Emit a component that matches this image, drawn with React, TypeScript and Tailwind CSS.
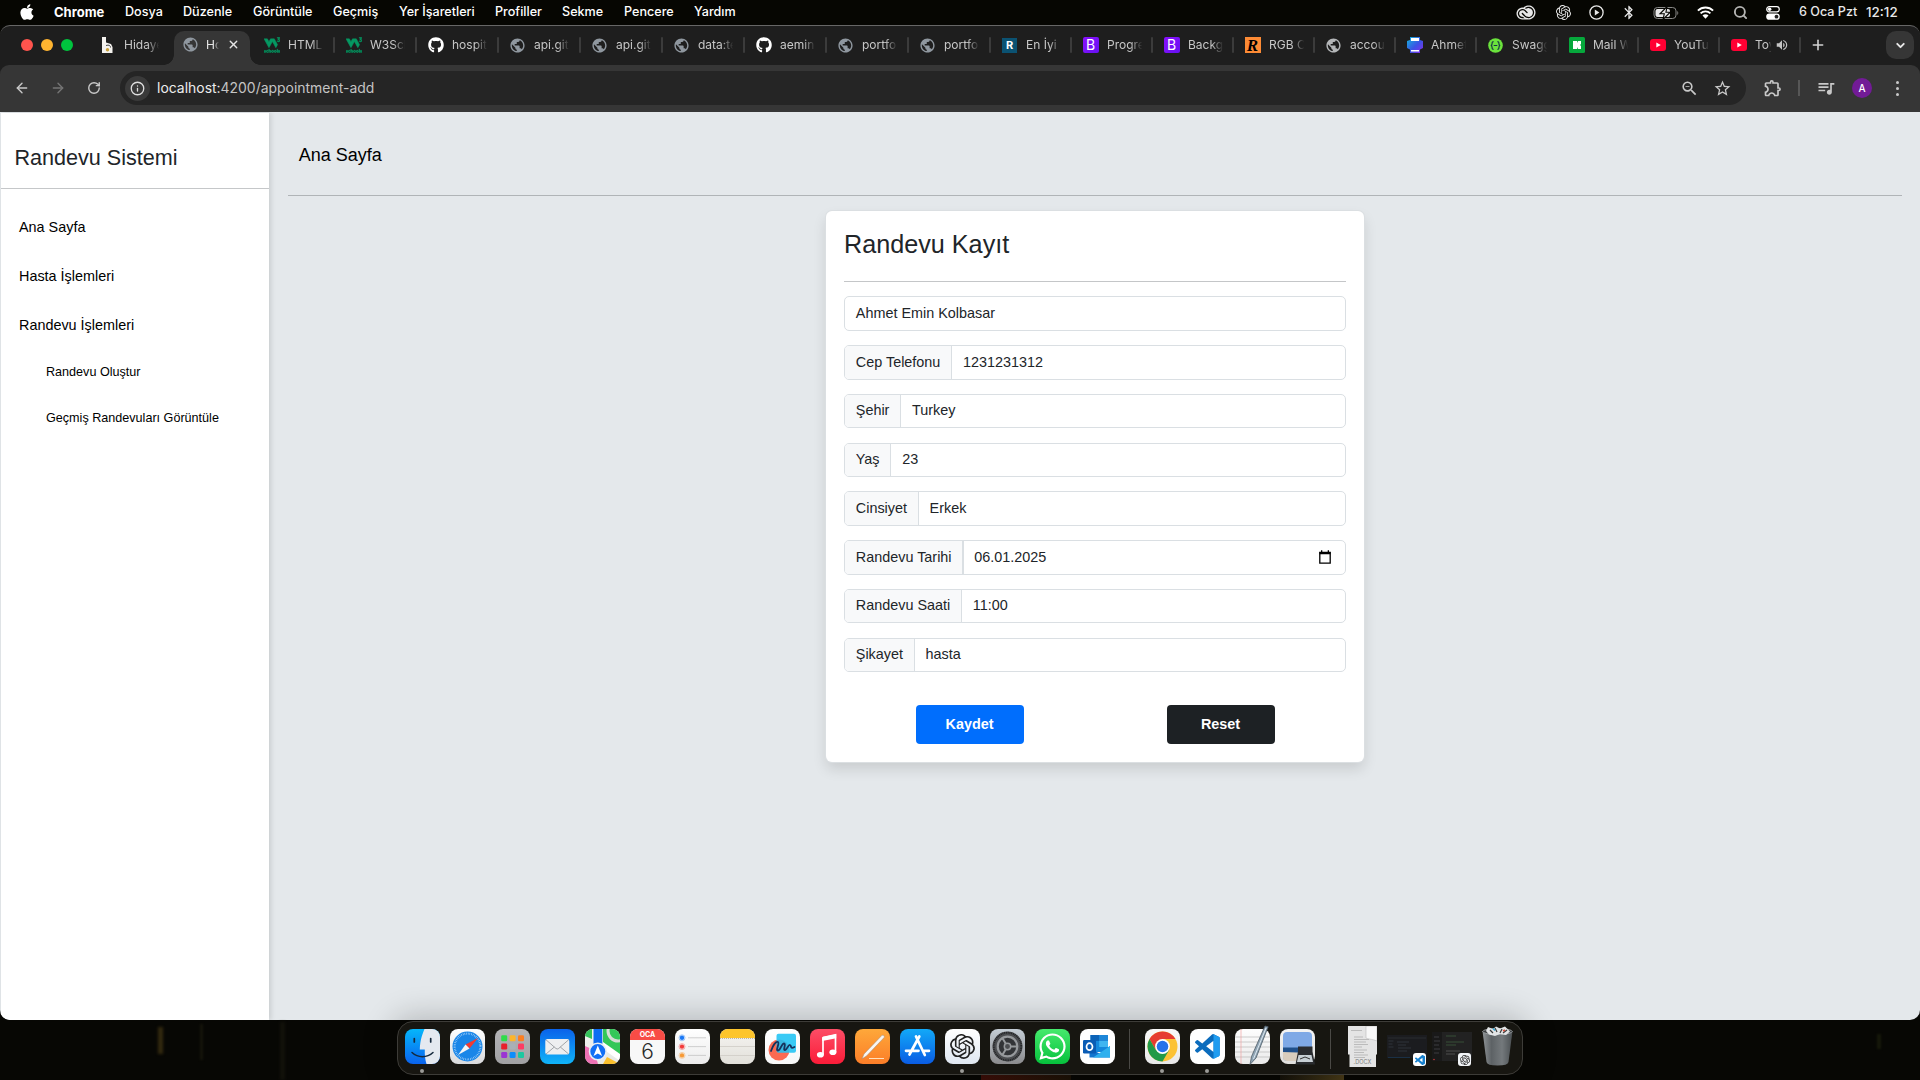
import type { ReactNode } from "react";
import { SiAdobecreativecloud, SiOpenai, SiW3Schools } from "react-icons/si";
import { FaApple, FaGithub, FaWhatsapp } from "react-icons/fa6";
import {
  MdBluetooth,
  MdOutlineExtension,
  MdPublic,
  MdQueueMusic,
  MdStarBorder,
  MdVolumeUp,
  MdZoomOut,
} from "react-icons/md";
import { ArrowLeft, ArrowRight, ChevronDown, Info, Plus, RotateCw, Search, X } from "lucide-react";

/* ---------- macOS menu bar ---------- */

const menus: [string, string][] = [
  ["Dosya", "w-[58px]"],
  ["Düzenle", "w-[70px]"],
  ["Görüntüle", "w-[80px]"],
  ["Geçmiş", "w-[66px]"],
  ["Yer İşaretleri", "w-[96px]"],
  ["Profiller", "w-[67px]"],
  ["Sekme", "w-[62px]"],
  ["Pencere", "w-[70px]"],
  ["Yardım", "w-[60px]"],
];

function Cell({ w, children }: { w: string; children: ReactNode }) {
  return <div className={`flex shrink-0 items-center justify-center ${w}`}>{children}</div>;
}

function MenuBar() {
  return (
    <div className="flex h-[25px] shrink-0 items-center justify-between bg-[#060602] text-white">
      <div className="flex h-full items-center pl-[18px] text-[12.6px] font-medium">
        <FaApple className="mb-[2px] size-[18px]" />
        <span className="ml-[18px] w-[71px] text-[13px] font-bold">Chrome</span>
        {menus.map(([m, w]) => (
          <span key={m} className={`whitespace-nowrap ${w}`}>{m}</span>
        ))}
      </div>
      <div className="flex h-full w-[413px] items-center text-[#e8e8e8]">
        <Cell w="w-[38px]"><SiAdobecreativecloud className="h-[19px] w-[20px]" /></Cell>
        <Cell w="w-[37px]"><SiOpenai className="size-[15px]" /></Cell>
        <Cell w="w-[28px]">
          <svg className="size-[15px]" viewBox="0 0 15 15">
            <circle cx="7.5" cy="7.5" r="6.6" fill="none" stroke="currentColor" strokeWidth="1.3" />
            <path d="M5.8 4.6v5.8l4.6-2.9z" fill="currentColor" />
          </svg>
        </Cell>
        <Cell w="w-[37px]"><MdBluetooth className="h-[17px] w-[16px]" /></Cell>
        <Cell w="w-[38px]">
          <svg className="h-[14px] w-[26px]" viewBox="0 0 26 14">
            <rect x="1" y="1.5" width="22" height="11" rx="3.4" fill="none" stroke="#8a8a88" strokeWidth="1" />
            <path d="M24.3 5v4c1.3-.5 1.3-3.5 0-4z" fill="#8a8a88" />
            <rect x="2.5" y="3" width="14.5" height="8" rx="2" fill="#e8e8e8" />
            <path d="M14.2.5 7 7.8h4.3L10 13.5l7.2-7.3h-4.3z" fill="#e8e8e8" stroke="#060602" strokeWidth="1.1" />
          </svg>
        </Cell>
        <Cell w="w-[40px]">
          <svg className="h-[13px] w-[17px]" viewBox="0 0 17 13">
            <g fill="none" stroke="#fff" strokeWidth="1.9">
              <path d="M.9 4.6a10.8 10.8 0 0 1 15.2 0" />
              <path d="M3.6 7.4a7 7 0 0 1 9.8 0" />
            </g>
            <path d="M5.5 9.5a4.2 4.2 0 0 1 6 0l-3 3.2z" fill="#fff" />
          </svg>
        </Cell>
        <Cell w="w-[30px]"><Search className="size-[15px] text-[#b5b5b3]" strokeWidth={3} /></Cell>
        <Cell w="w-[36px]">
          <svg className="h-[14px] w-[14px]" viewBox="0 0 14 14">
            <rect x=".7" y=".7" width="12.6" height="5.2" rx="2.6" fill="none" stroke="#fff" strokeWidth="1.2" />
            <circle cx="3.6" cy="3.3" r="1.8" fill="#fff" />
            <rect x=".2" y="7.5" width="13.6" height="6.3" rx="3.1" fill="#fff" />
            <circle cx="10.5" cy="10.65" r="1.9" fill="#222" />
          </svg>
        </Cell>
        <span className="ml-[8px] w-[67px] whitespace-nowrap text-[12.6px] font-medium">6 Oca Pzt</span>
        <span className="text-[13.4px] font-medium">12:12</span>
      </div>
    </div>
  );
}

/* ---------- tab strip ---------- */

const Globe = () => <MdPublic className="size-[17px] text-[#8f979f]" />;
const W3 = () => <SiW3Schools className="size-[16px] stroke-[#059862] stroke-[0.8] text-[#059862]" />;
const YouTube = () => (
  <svg className="h-[12px] w-[16px]" viewBox="0 0 16 12">
    <rect width="16" height="12" rx="3" fill="#ff0033" />
    <path d="M6.3 3.4v5.2L10.8 6z" fill="#fff" />
  </svg>
);
const Boot = () => (
  <div className="flex size-[16px] items-center justify-center rounded-[2px] bg-gradient-to-br from-[#8a0dfb] to-[#6610f2] text-[14px] leading-none text-white">
    B
  </div>
);

type Tab = { label: string; icon: ReactNode; narrow?: boolean; sep?: boolean; sound?: boolean };
const tabsAfter: Tab[] = [
  { label: "HTML", icon: <W3 /> },
  { label: "W3Sch", icon: <W3 /> },
  { label: "hospit", icon: <FaGithub className="size-[16px] text-white" /> },
  { label: "api.git", icon: <Globe /> },
  { label: "api.git", icon: <Globe /> },
  { label: "data:te", icon: <Globe /> },
  { label: "aemin", icon: <FaGithub className="size-[16px] text-white" /> },
  { label: "portfo", icon: <Globe /> },
  { label: "portfo", icon: <Globe /> },
  {
    label: "En İyi",
    narrow: true,
    icon: (
      <div className="flex size-[15px] items-center justify-center bg-[#0b5272] text-[11px] font-bold leading-none text-white">R</div>
    ),
  },
  { label: "Progre", narrow: true, icon: <Boot /> },
  { label: "Backg", narrow: true, icon: <Boot /> },
  {
    label: "RGB C",
    narrow: true,
    icon: (
      <div className="flex size-[16px] items-center justify-center bg-[#fd8b35] font-['Liberation_Serif',serif] text-[17px] font-bold italic leading-none text-black">
        R
      </div>
    ),
  },
  { label: "accou", narrow: true, icon: <MdPublic className="size-[17px] text-[#b4b6b8]" /> },
  {
    label: "Ahmet",
    narrow: true,
    icon: (
      <svg className="h-[16px] w-[16px]" viewBox="0 0 16 16">
        <defs>
          <linearGradient id="print" x1="0" y1="0" x2="1" y2="1">
            <stop offset="0" stopColor="#10b9d8" />
            <stop offset=".55" stopColor="#3b53e6" />
            <stop offset="1" stopColor="#8a2be8" />
          </linearGradient>
        </defs>
        <path d="M3 0h10v3l3 1v7l-3 1.5V16H3v-3.5L0 11V4l3-1z" fill="url(#print)" />
        <path d="M4 1h8v3H4zM4 13h8v1.5H4z" fill="#fff" />
      </svg>
    ),
  },
  {
    label: "Swagg",
    narrow: true,
    icon: (
      <svg className="size-[15px]" viewBox="0 0 15 15">
        <circle cx="7.5" cy="7.5" r="7.3" fill="#6be33c" />
        <path d="M5.6 3.6q-1.6 0-1.5 1.8 0 2-1.3 2.1 1.3.1 1.3 2.1-.1 1.8 1.5 1.8M9.4 3.6q1.6 0 1.5 1.8 0 2 1.3 2.1-1.3.1-1.3 2.1.1 1.8-1.5 1.8M5.7 7.5h3.6" fill="none" stroke="#173647" strokeWidth="1.2" />
      </svg>
    ),
  },
  {
    label: "Mail W",
    narrow: true,
    icon: (
      <svg className="size-[16px]" viewBox="0 0 16 16">
        <rect width="16" height="16" rx="1.5" fill="#06a83c" />
        <path d="M4 4h4v2L9 4h3v3l-1 1 1 1v3H9l-1-2v2H4z" fill="#fff" />
      </svg>
    ),
  },
  { label: "YouTu", narrow: true, icon: <YouTube /> },
  { label: "Toy", narrow: true, icon: <YouTube />, sound: true },
];

function TabItem({ t }: { t: Tab }) {
  return (
    <div className={`flex h-full shrink-0 items-center ${t.narrow ? "w-[81px]" : "w-[82px]"}`}>
      <div className="ml-[10px] flex w-[17px] shrink-0 justify-center">{t.icon}</div>
      <div
        className={`ml-[8px] shrink-0 whitespace-nowrap ${t.sound ? "w-[17px] [mask-image:linear-gradient(to_right,black_75%,transparent_95%)]" : "w-[36px] [mask-image:linear-gradient(to_right,black_65%,transparent_98%)]"}`}
      >
        {t.label}
      </div>
      {t.sound && <MdVolumeUp className="ml-[3px] size-[14px] shrink-0 text-[#c4c4c4]" />}
      {t.sep !== false && <div className="ml-auto h-[16px] w-[2px] rounded bg-[#3b3b3b]" />}
    </div>
  );
}

function TabStrip() {
  return (
    <div className="flex h-[39px] items-center pb-px pl-px text-[12px] text-[#c7c7c7]">
      <div className="flex w-[88px] shrink-0 gap-[8px] pl-[20px]">
        <i className="size-[12px] rounded-full bg-[#ff544d]" />
        <i className="size-[12px] rounded-full bg-[#ffb430]" />
        <i className="size-[12px] rounded-full bg-[#00c43e]" />
      </div>
      <TabItem
        t={{
          label: "Hidaye",
          sep: false,
          icon: (
            <svg className="h-[16px] w-[11px]" viewBox="0 0 11 16">
              <path d="M0 0h4v5.5l5 1.5 1.5 3v6H0z" fill="#f4f2ee" />
              <path d="M4 8.5c3-1 4.5 0 4.5 2" stroke="#444" fill="none" strokeWidth="1" />
              <circle cx="5.5" cy="12.8" r="1.7" fill="#caa13a" />
            </svg>
          ),
        }}
      />
      <div className="relative -mb-px flex h-[34px] w-[82px] shrink-0 items-center self-end px-[3px]">
        <div className="absolute inset-y-0 left-[3px] right-[3px] rounded-t-[10px] bg-[#363636]" />
        <div className="absolute bottom-0 left-[-7px] size-[10px] bg-[radial-gradient(circle_at_0_0,transparent_9.5px,#363636_10px)]" />
        <div className="absolute bottom-0 right-[-7px] size-[10px] bg-[radial-gradient(circle_at_100%_0,transparent_9.5px,#363636_10px)]" />
        <div className="relative flex items-center pb-[7px] pl-[8px] text-[#e6e6e6]">
          <Globe />
          <div className="ml-[7px] w-[13px] shrink-0 whitespace-nowrap [mask-image:linear-gradient(to_right,black_60%,transparent)]">Ho</div>
          <X className="ml-[8px] size-[13px]" strokeWidth={2.5} />
        </div>
      </div>
      {tabsAfter.map((t, i) => (
        <TabItem key={i} t={t} />
      ))}
      <Plus className="ml-[9px] size-[16px] shrink-0 text-[#d2d2d2]" strokeWidth={2.4} />
      <div className="ml-auto mr-[6px] flex size-[28px] shrink-0 items-center justify-center rounded-[10px] bg-[#363636]">
        <ChevronDown className="size-[13px] text-[#e8e8e8]" strokeWidth={3.5} />
      </div>
    </div>
  );
}

function Toolbar() {
  return (
    <div className="flex h-[47px] items-center rounded-t-[9px] bg-[#363636] pb-px text-[#c9c9c9]">
      <ArrowLeft className="ml-[14px] size-[16px] shrink-0" strokeWidth={2.1} />
      <ArrowRight className="ml-[20px] size-[16px] shrink-0 text-[#757575]" strokeWidth={2.1} />
      <RotateCw className="ml-[21px] size-[14px] shrink-0" strokeWidth={2.4} />
      <div className="ml-[19px] flex h-[34px] w-[1626px] shrink-0 items-center rounded-full bg-[#252525]">
        <div className="ml-[5px] flex size-[25px] items-center justify-center rounded-full bg-[#3a3a3a]">
          <Info className="size-[15px] text-[#dedede]" strokeWidth={2.1} />
        </div>
        <span className="ml-[7px] text-[13.95px] text-[#c4c4c4]">
          <span className="text-[#ececec]">localhost:</span>4200/appointment-add
        </span>
        <MdZoomOut className="ml-auto size-[19px]" />
        <MdStarBorder className="ml-[14px] mr-[14px] size-[19px]" />
      </div>
      <MdOutlineExtension className="ml-[17px] size-[20px] shrink-0" />
      <div className="ml-[15px] h-[16px] w-[2px] shrink-0 bg-[#575757]" />
      <MdQueueMusic className="ml-[16px] size-[20px] shrink-0" />
      <div className="ml-[16px] flex size-[20px] shrink-0 items-center justify-center rounded-full bg-[#721b96] text-[10px] font-medium text-white">
        A
      </div>
      <div className="ml-[24px] flex flex-col gap-[3px]">
        <i className="size-[3px] rounded-full bg-[#c9c9c9]" />
        <i className="size-[3px] rounded-full bg-[#c9c9c9]" />
        <i className="size-[3px] rounded-full bg-[#c9c9c9]" />
      </div>
    </div>
  );
}

/* ---------- page ---------- */

function Sidebar() {
  return (
    <aside className="relative mt-px w-[268px] shrink-0 bg-white text-black shadow-[2px_0_5px_rgba(0,0,0,0.12)]">
      <div className="h-[76px] border-b border-[#c5c7c9] pl-[13.4px] pt-[32px]">
        <h2 className="text-[21.6px] leading-[26px] text-[#212529]">Randevu Sistemi</h2>
      </div>
      <nav className="mt-[14px] flex flex-col text-[14.4px]">
        {["Ana Sayfa", "Hasta İşlemleri", "Randevu İşlemleri"].map((t) => (
          <a key={t} className="flex h-[49px] items-center pl-[18px]">{t}</a>
        ))}
        {["Randevu Oluştur", "Geçmiş Randevuları Görüntüle"].map((t) => (
          <a key={t} className="flex h-[46px] items-center pb-[2px] pl-[45px] text-[12.6px]">{t}</a>
        ))}
      </nav>
    </aside>
  );
}

/* label, value, row height and the gap above the row */
const fields: [string | null, string, string][] = [
  [null, "Ahmet Emin Kolbasar", "h-[35px]"],
  ["Cep Telefonu", "1231231312", "mt-[14px] h-[35px]"],
  ["Şehir", "Turkey", "mt-[14px] h-[34px]"],
  ["Yaş", "23", "mt-[15px] h-[34px]"],
  ["Cinsiyet", "Erkek", "mt-[14px] h-[35px]"],
  ["Randevu Tarihi", "06.01.2025", "mt-[14px] h-[35px]"],
  ["Randevu Saati", "11:00", "mt-[14px] h-[34px]"],
  ["Şikayet", "hasta", "mt-[15px] h-[34px]"],
];

function Field({ label, value, box }: { label: string | null; value: string; box: string }) {
  const isDate = label === "Randevu Tarihi";
  return (
    <div className={`flex overflow-hidden rounded-[5px] border border-[#dadfe3] text-[14.4px] leading-[22px] text-[#212529] ${box}`}>
      {label && (
        <span
          className={`flex items-center border-[#dadfe3] bg-[#f8f9fa] px-[10.8px] pb-[2px] ${isDate ? "border-r-2" : "border-r"}`}
        >
          {label}
        </span>
      )}
      <div className={`flex flex-1 items-center justify-between pb-[2px] ${isDate ? "pl-[9.8px]" : "pl-[10.8px]"}`}>
        {value}
        {isDate && (
          <svg className="mr-[14px] h-[14px] w-[12px]" viewBox="0 0 12 14">
            <path d="M.8 2.5h10.4v10.7H.8z" fill="none" stroke="#000" strokeWidth="1.3" />
            <path d="M.5 2h11v2.2H.5zM2 .3h1.3V2H2zM8.7.3H10V2H8.7z" fill="#000" />
          </svg>
        )}
      </div>
    </div>
  );
}

function Page() {
  return (
    <div className="flex h-[908px] overflow-hidden rounded-b-[10px] bg-[#e4e8eb] pl-px font-['Liberation_Sans',Arial,sans-serif]">
      <Sidebar />
      <main className="flex flex-1 flex-col pl-[19px] pr-[18px]">
        <div className="h-[84px] border-b border-[#b0b4b7] pl-[10.8px] pt-[30px] text-[18px] leading-[27px] text-black">Ana Sayfa</div>
        <section className="mt-[15px] h-[551px] w-[538px] self-center rounded-[6px] bg-white px-[18px] pt-[18px] shadow-[0_0_0_1px_#dbdfe2,0_7px_14px_rgba(0,0,0,0.12)]">
          <h3 className="text-[25.2px] leading-[30px] text-[#212529]">Randevu Kayıt</h3>
          <hr className="mt-[22px] border-0 border-t border-[#c4c6c8]" />
          <div className="mt-[14px] flex flex-col">
            {fields.map(([l, v, box]) => (
              <Field key={v} label={l} value={v} box={box} />
            ))}
          </div>
          <div className="mt-[33px] flex text-[14.4px] font-bold text-white">
            <div className="flex flex-1 justify-center">
              <button className="h-[39px] w-[108px] rounded-[4px] bg-[#006efd]">Kaydet</button>
            </div>
            <div className="flex flex-1 justify-center">
              <button className="h-[39px] w-[108px] rounded-[4px] bg-[#1d2124]">Reset</button>
            </div>
          </div>
        </section>
      </main>
    </div>
  );
}

/* ---------- dock ---------- */

const vscodePath =
  "M23.15 2.587L18.21.21a1.494 1.494 0 0 0-1.705.29l-9.46 8.63-4.12-3.128a.999.999 0 0 0-1.276.057L.327 7.261A1 1 0 0 0 .326 8.74L3.899 12 .326 15.26a1 1 0 0 0 .001 1.479L1.65 17.94a.999.999 0 0 0 1.276.057l4.12-3.128 9.46 8.63a1.492 1.492 0 0 0 1.704.29l4.942-2.377A1.5 1.5 0 0 0 24 20.06V3.939a1.5 1.5 0 0 0-.85-1.352zm-5.146 14.861L10.826 12l7.178-5.448v10.896z";

function Grad({ id, a, b }: { id: string; a: string; b: string }) {
  return (
    <linearGradient id={id} x1="0" y1="0" x2="0" y2="1">
      <stop offset="0" stopColor={a} />
      <stop offset="1" stopColor={b} />
    </linearGradient>
  );
}

/** Rounded 35px application tile with a vertical gradient. */
function Tile({ id, a, b, dot, children }: { id: string; a: string; b: string; dot?: boolean; children?: ReactNode }) {
  return (
    <div className="relative size-[35px] shrink-0">
      <svg className="size-[35px] overflow-visible" viewBox="0 0 35 35">
        <defs>
          <Grad id={`g-${id}`} a={a} b={b} />
          <clipPath id={`c-${id}`}><rect width="35" height="35" rx="8" /></clipPath>
        </defs>
        <rect width="35" height="35" rx="8" fill={`url(#g-${id})`} />
        {children}
      </svg>
      {dot && <i className="absolute bottom-[-9px] left-[15px] size-[4px] rounded-full bg-[#9b9b98]" />}
    </div>
  );
}

const padColors = ["#2fdc4b", "#fcb52c", "#fb7f22", "#e8202c", "#a9b0b6", "#fd3c63", "#9b35d3", "#0d8dfb", "#1cc8a0"];

function Dock() {
  return (
    <div className="relative z-10 mt-px flex h-[54px] w-[1126px] items-start rounded-[16px] border border-[#3d3c38] bg-[#171611] pl-[7px] pt-[7px] shadow-[0_0_30px_6px_rgba(0,0,0,0.2)]">
      <div className="flex gap-[10px]">
        <Tile id="finder" a="#05b6fb" b="#0a63ee" dot>
          <g clipPath="url(#c-finder)">
            <path d="M19.5 0C16 8 15 14 14.8 20.5h5c-.2 6 .4 10 1.7 14.5H35V0z" fill="#e4e9f0" />
          </g>
          <path d="M9.3 9.5v3.5M25.7 9.5v3.5" stroke="#15293d" strokeWidth="1.7" strokeLinecap="round" />
          <path d="M7 23.5c6 5.5 15 5.5 21 0" stroke="#15293d" strokeWidth="1.5" fill="none" strokeLinecap="round" />
        </Tile>
        <Tile id="safari" a="#ffffff" b="#d9dadc">
          <circle cx="17.5" cy="17.5" r="15" fill="#1a86e8" />
          <circle cx="17.5" cy="17.5" r="12.9" fill="none" stroke="#cfe6fb" strokeWidth="2" strokeDasharray=".5 1.19" />
          <path d="M28 9 19.5 19.5 15.5 15.5z" fill="#f4392f" />
          <path d="M8 26l7.5-10.5 4 4z" fill="#f5f5f5" />
        </Tile>
        <Tile id="pad" a="#b4b4b6" b="#a1a1a3">
          {padColors.map((c, i) => (
            <rect key={c} x={6.2 + (i % 3) * 8.4} y={6.2 + Math.floor(i / 3) * 8.4} width="6" height="6" rx="1.3" fill={c} />
          ))}
        </Tile>
        <Tile id="mail" a="#0a62ea" b="#10b4f8">
          <rect x="5.3" y="10" width="24" height="15.5" rx="2" fill="#eeeff0" />
          <path d="M6 10.8 16 19.5q1.3 1 2.6 0L28.6 10.8M6 25l8.3-7M28.6 25l-8.3-7" fill="none" stroke="#8d9094" strokeWidth=".8" />
        </Tile>
        <Tile id="maps" a="#f1f3ef" b="#e6e8e4">
          <g clipPath="url(#c-maps)">
            <path d="M18 0h17v26L18 14z" fill="#33c759" />
            <path d="M0 0h7v10L0 7z" fill="#35c45b" />
            <path d="M0 17l9 4 4 14H0z" fill="#ee71b4" />
            <path d="M18 35l4-7 13 7z" fill="#fbc02d" />
            <path d="M8.5 0h8.8v20H8.5z" fill="#0d6df2" />
            <circle cx="33" cy="2" r="10" fill="none" stroke="#d7dcd7" strokeWidth="3" />
            <path d="M18 13l17 12v7L18 20z" fill="#fff" />
          </g>
          <circle cx="12.8" cy="22.5" r="8.3" fill="#1270f6" stroke="#e9eef4" strokeWidth="1.6" />
          <path d="M12.8 16.5l4.3 10.5-4.3-2.4-4.3 2.4z" fill="#fff" />
        </Tile>
        <div className="h-[35px] w-[35px] shrink-0 overflow-hidden rounded-[8px] bg-[#f8f8f8] text-center">
          <div className="h-[11px] bg-[#f84c46] text-[7px] font-bold leading-[12px] text-white">OCA</div>
          <div className="text-[21px] font-light leading-[23px] text-[#2a2a2a]">6</div>
        </div>
        <Tile id="rem" a="#ffffff" b="#ececec">
          {["#1a78f5", "#f33b3a", "#f79a36"].map((c, i) => (
            <g key={c}>
              <circle cx="7" cy={8.8 + i * 8.8} r="2.2" fill={c} />
              <circle cx="7" cy={8.8 + i * 8.8} r="3" fill="none" stroke={c} strokeWidth=".4" />
              <path d={`M13 ${8.8 + i * 8.8}h18`} stroke="#c9c9c9" strokeWidth=".9" />
            </g>
          ))}
        </Tile>
        <Tile id="notes" a="#f6f5f2" b="#e2e0da">
          <path clipPath="url(#c-notes)" d="M0 0h35v9H0z" fill="#fdc52c" />
          <path d="M0 9.5h35" stroke="#b9b4a8" strokeWidth="1" strokeDasharray="1 1" />
          <path d="M0 17.5h35M0 26.5h35" stroke="#cfccc5" strokeWidth=".8" />
        </Tile>
        <Tile id="free" a="#ffffff" b="#f7f7f7">
          <circle cx="14" cy="21" r="10.5" fill="#fb6a51" />
          <rect x="11.5" y="4.8" width="19.5" height="19" rx="2" fill="#1fc3f4" opacity=".88" />
          <path d="M6 22c2-6 5-10 7-9s-3 9 0 8.5 3.5-7.5 6-7-1.5 7 1 6.5 3-5.5 5-5-.5 4.5 4.500 2" stroke="#16325c" strokeWidth="1.8" fill="none" strokeLinecap="round" />
        </Tile>
        <Tile id="music" a="#fc4d66" b="#fb1c38">
          <path d="M13 8.5l12.5-2.6v17M13 8.5v17.2" stroke="#fff" strokeWidth="1.7" fill="none" />
          <path d="M12.2 8l14-2.7v4L12.2 12z" fill="#fff" />
          <ellipse cx="10.4" cy="25.7" rx="3.5" ry="2.8" fill="#fff" />
          <ellipse cx="22.9" cy="23.2" rx="3.5" ry="2.8" fill="#fff" />
        </Tile>
        <Tile id="pages" a="#fea83a" b="#fc7e28">
          <path d="M27 6.300 Q28.500 5.300 29.600 8 L11.500 27 L7 29.800 L9 25z" fill="#f8f6f3" stroke="#9c8675" strokeWidth=".5" />
          <path d="M14 29.5h15" stroke="#ffe0bd" strokeWidth="1" />
        </Tile>
        <Tile id="store" a="#12a9f8" b="#0a5ce4">
          <path d="M16 7.5 24.8 26M19.3 7.5 9.5 25.5M6 21.8h12.5M23 21.8h6" stroke="#fff" strokeWidth="2.7" strokeLinecap="round" />
        </Tile>
        <Tile id="gpt" a="#ffffff" b="#dfe7f1" dot>
          <SiOpenai x="5" y="5" size={25} color="#222" />
        </Tile>
        <Tile id="settings" a="#c4cdd5" b="#8b8b8d">
          <circle cx="17.5" cy="17.5" r="15" fill="#4b4d50" />
          <circle cx="17.5" cy="17.5" r="13.8" fill="none" stroke="#232426" strokeWidth="1.8" strokeDasharray="1 .8" />
          <circle cx="17.5" cy="17.5" r="9.8" fill="#323437" stroke="#96999c" strokeWidth="2.2" />
          <path d="M17.5 17.5h9.5M17.5 17.5l-5-8.3M17.5 17.5l-5 8.3" stroke="#96999c" strokeWidth="2" />
          <circle cx="17.5" cy="17.5" r="3.2" fill="#4b4d50" stroke="#96999c" strokeWidth="1.5" />
        </Tile>
        <Tile id="wa" a="#46ea6d" b="#06c13c">
          <FaWhatsapp x="2.5" y="2.5" size={30} color="#fff" />
        </Tile>
        <Tile id="outlook" a="#ffffff" b="#ffffff">
          <path d="M10.5 6h17.5v17H10.5z" fill="#1488dd" />
          <path d="M10.5 6h8.7v6h-8.7z" fill="#0b63b8" />
          <path d="M19.2 6H28v6h-8.8z" fill="#1d86d8" />
          <path d="M19.2 12H28v6h-8.8z" fill="#3fb5f0" />
          <path d="M9.5 19l10 5.5L30 17v11.5H9.5z" fill="#1476cf" />
          <path d="M30 17v11.5H13z" fill="#2fb0ee" />
          <rect x="3" y="11" width="13" height="13.5" rx="1.2" fill="#0a5cb5" />
          <ellipse cx="9.5" cy="17.7" rx="3" ry="3.5" fill="none" stroke="#fff" strokeWidth="1.7" />
        </Tile>
      </div>
      <div className="ml-[14px] h-[40px] w-px shrink-0 bg-[#4a4945]" />
      <div className="ml-[15px] flex gap-[10px]">
        <Tile id="chrome" a="#f8f8f8" b="#e9e9e9" dot>
          <circle cx="17.5" cy="17.5" r="15" fill="#fcc234" />
          <path d="M17.5 10H30.49A15 15 0 0 0 4.51 10L11 21.2z" fill="#e63c31" />
          <path d="M4.51 10A15 15 0 0 0 17.5 32.5L24 21.2 11 21.2z" fill="#229a48" />
          <circle cx="17.5" cy="17.5" r="7.4" fill="#fff" />
          <circle cx="17.5" cy="17.5" r="5.8" fill="#2673ea" />
        </Tile>
        <Tile id="vs" a="#ffffff" b="#ffffff" dot>
          <path transform="translate(5 5) scale(1.03)" d={vscodePath} fill="#0b6cbd" />
          <path d="M23.5 5.2 29 7.9q.7.4.7 1.2v17q0 .8-.7 1.2l-5.5 2.7z" fill="#1f9cf0" />
        </Tile>
        <Tile id="te" a="#fdfdfd" b="#ebebeb">
          <path d="M0 8h35M0 13h35M0 18h35M0 23h35M0 28h35" stroke="#b8b8b8" strokeWidth=".7" />
          <path d="M6 0v35" stroke="#f0a3a3" strokeWidth=".7" />
          <path d="M30-3l3.2.8L21 29l-6 6.5 1.5-8z" fill="#8fa4b4" stroke="#4c5a66" strokeWidth=".8" />
          <path d="M31-1 18.5 30" stroke="#dde8f0" strokeWidth="1" />
        </Tile>
        <Tile id="prev" a="#f4f4f4" b="#e0dfdd">
          <rect x="3" y="3" width="29" height="29" rx="4" fill="#7fa9e6" />
          <path d="M3 18.5h29V24H3z" fill="#20508a" />
          <path d="M3 23l29 1v4q0 4-4 4H7q-4 0-4-4z" fill="#d9cdbd" />
          <path d="M18 17.5h14.5v5l2.5 13H15.5L18 22.5z" fill="#2a2c2f" />
          <path d="M18.5 26h13l1.5 7h-16z" fill="#c7cfd4" />
          <path d="M20 30l5-2 5 2" stroke="#333" fill="none" />
        </Tile>
      </div>
      <div className="ml-[15px] h-[40px] w-px shrink-0 bg-[#4a4945]" />
      <svg className="-mt-[3px] ml-[17px] h-[41px] w-[29px] shrink-0" viewBox="0 0 29 41">
        <path d="M0 0h29v28.5h-1V41H1.5V28.5H0z" fill="#e4e4e4" />
        <path d="M18 0h11v15C24 13 19 13 18 12z" fill="#f8f8f8" stroke="#b9b9b9" strokeWidth=".6" />
        <path d="M3 4.5h11M6 11h9M6 13.5h15M6 16h12M6 18.5h14M6 21h8M6 24h13M6 26.5h10M6 29h14M6 31.5h11" stroke="#a9a9a9" strokeWidth=".7" />
        <text x="14.5" y="38" textAnchor="middle" fontSize="5.6" fill="#7d7d7d" fontFamily="Inter">.DOCX</text>
      </svg>
      <div className="relative ml-[10px] mt-[6px] h-[23px] w-[40px] shrink-0 bg-[#1b1c1f]">
        <svg className="h-[23px] w-[40px]" viewBox="0 0 40 23">
          <path d="M1 3h38" stroke="#2b2d31" />
          <path d="M1.5 6h5M1.5 9h4M1.5 12h5M10 7h12M11 10h8M11 13h13M11 16h9" stroke="#333a42" strokeWidth=".8" />
          <path d="M1 22.5h22" stroke="#1a3a58" strokeWidth=".7" />
        </svg>
        <div className="absolute left-[26px] top-[18px] flex size-[13px] items-center justify-center rounded-[3px] bg-white">
          <svg className="size-[10px]" viewBox="0 0 24 24"><path d={vscodePath} fill="#1580cf" /></svg>
        </div>
      </div>
      <div className="relative ml-[5px] mt-[3px] h-[29px] w-[40px] shrink-0 bg-[#222222]">
        <svg className="h-[29px] w-[40px]" viewBox="0 0 40 29">
          <path d="M0 0h10v29H0z" fill="#191919" />
          <path d="M2 5h5M2 9h6M2 13h5M2 17h6M2 21h5" stroke="#45454a" strokeWidth=".8" />
          <path d="M14 4h10M14 10h18M14 13h10" stroke="#3d5a3c" strokeWidth=".8" />
          <path d="M14 19h14M14 22h9" stroke="#5a5a5a" strokeWidth=".8" />
          <circle cx="2" cy="27.5" r=".8" fill="#c03a3a" />
        </svg>
        <div className="absolute left-[26px] top-[21px] flex size-[13px] items-center justify-center rounded-[3px] bg-[#f2f5f8]">
          <SiOpenai className="size-[10px] text-[#222]" />
        </div>
      </div>
      <svg className="-mt-[3px] ml-[10px] h-[40px] w-[31px] shrink-0" viewBox="0 0 31 40">
        <defs>
          <linearGradient id="bin" x1="0" y1="0" x2="1" y2="0">
            <stop offset="0" stopColor="#8f9497" />
            <stop offset=".3" stopColor="#5d6265" />
            <stop offset=".65" stopColor="#74797c" />
            <stop offset="1" stopColor="#4a4f52" />
          </linearGradient>
        </defs>
        <path d="M.5 5h30L26.5 36q-.5 3.5-11 3.5T4.5 36z" fill="url(#bin)" />
        <ellipse cx="15.5" cy="5.5" rx="14.8" ry="3" fill="#3a3d3f" stroke="#a8adb0" strokeWidth=".8" />
        <path d="M4 5l2-4 5 2 3-2.5 4 2 5-2 3 3 2 2-4 3.5-6-1-5 2-6-1.5z" fill="#e3e5e6" />
        <path d="M8 4l3 3M13 2l2 4M20 3l-2 4M25 4l-4 3" stroke="#3b3b3b" strokeWidth="1.2" />
        <path d="M11 2.5l2 2" stroke="#2fa7d8" strokeWidth="1.5" />
        <path d="M21 5l2-1" stroke="#d8503c" strokeWidth="1.5" />
      </svg>
    </div>
  );
}

export default function App() {
  return (
    <div className="flex h-[1080px] w-[1920px] flex-col overflow-hidden bg-[#070704] font-['Inter',sans-serif]">
      <MenuBar />
      <div className="rounded-[10px] rounded-b-none border-t border-[#666666] bg-[#1e1e1e]">
        <TabStrip />
        <Toolbar />
      </div>
      <Page />
      <div className="relative flex h-[60px] justify-center bg-[#070704]">
        <i className="absolute left-[158px] top-[7px] h-[27px] w-[5px] bg-[#33290f] blur-[1.5px]" />
        <i className="absolute left-[200px] top-[4px] h-[36px] w-[3px] bg-[#15140b] blur-[1px]" />
        <i className="absolute left-[280px] top-[2px] h-[58px] w-[5px] bg-[#12110a] blur-[1.5px]" />
        <i className="absolute left-[1877px] top-[14px] h-[15px] w-[4px] bg-[#16180a] blur-[1px]" />
        <i className="absolute left-[981px] top-[55px] h-[5px] w-[90px] bg-gradient-to-r from-[#3d0e08] to-[#1c1206]" />
        <i className="absolute left-[1280px] top-[55px] h-[5px] w-[64px] bg-gradient-to-r from-[#15120a] to-[#4a3c18]" />
        <Dock />
      </div>
    </div>
  );
}
